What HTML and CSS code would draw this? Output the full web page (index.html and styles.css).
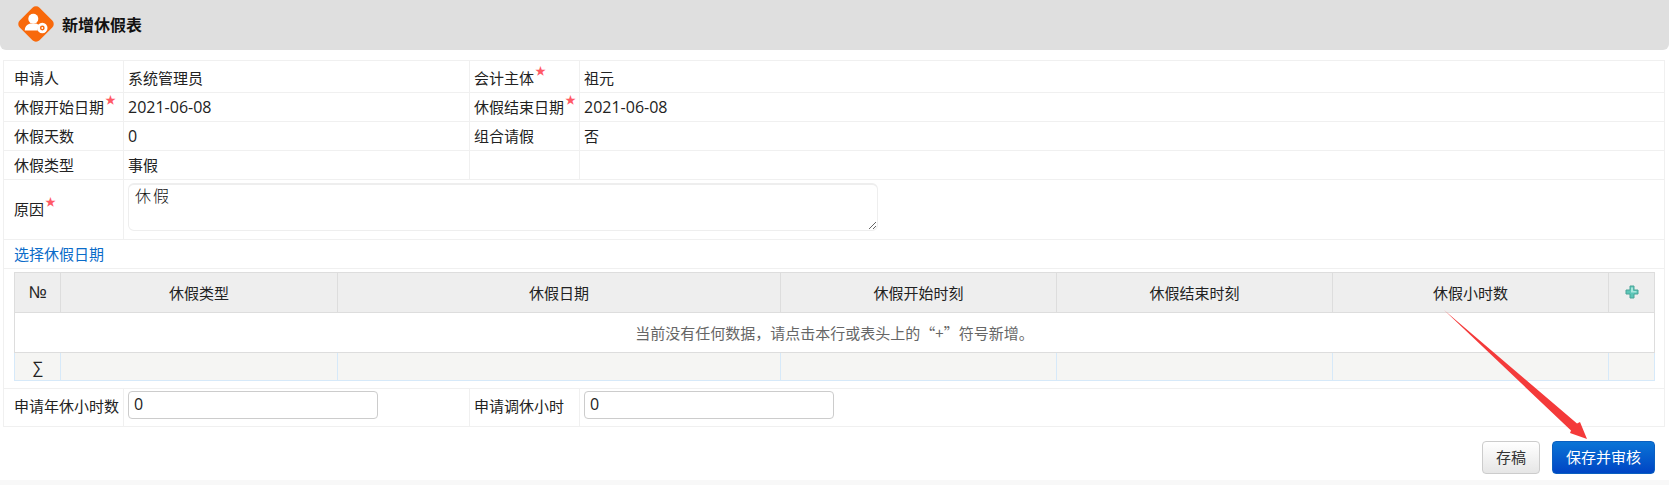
FILE: index.html
```html
<!DOCTYPE html>
<html lang="zh-CN">
<head>
<meta charset="utf-8">
<title>新增休假表</title>
<link rel="stylesheet" href="styles.css">
</head>
<body>
<div class="page">
  <header class="head">
    <svg class="logo" width="36" height="36" viewBox="0 0 36 36">
      <rect x="4" y="4" width="28" height="28" rx="5" transform="rotate(45 18 18)" fill="#f8690b"/>
      <circle cx="15.300" cy="12.700" r="5" fill="#fff"/>
      <path d="M6.700 24.500c0-3.500 2-6 5.500-7h6c1.500.5 2.500 1.200 3.200 2-1.400 1.200-2 3.200-1.600 5z" fill="#fff"/>
      <circle cx="24.300" cy="22" r="5.200" fill="#fff"/>
      <circle cx="24.300" cy="22" r="2.400" fill="#f8690b"/>
      <circle cx="24.300" cy="22" r=".9" fill="#fff"/>
    </svg>
    <h1 class="title">新增休假表</h1>
  </header>

  <table class="form">
    <colgroup><col class="c1"><col class="c2"><col class="c3"><col></colgroup>
    <tr class="r-first">
      <td class="label">申请人</td><td class="val">系统管理员</td>
      <td class="label-2">会计主体<span class="req">★</span></td><td class="val">祖元</td>
    </tr>
    <tr class="r">
      <td class="label">休假开始日期<span class="req">★</span></td><td class="val num">2021-06-08</td>
      <td class="label-2">休假结束日期<span class="req">★</span></td><td class="val num">2021-06-08</td>
    </tr>
    <tr class="r">
      <td class="label">休假天数</td><td class="val num">0</td>
      <td class="label-2">组合请假</td><td class="val">否</td>
    </tr>
    <tr class="r">
      <td class="label">休假类型</td><td class="val">事假</td>
      <td class="label-2"></td><td class="val"></td>
    </tr>
    <tr class="r-reason">
      <td class="label reason-label">原因<span class="req">★</span></td>
      <td class="val reason-cell" colspan="3"><textarea class="reason">休假</textarea></td>
    </tr>
    <tr class="r">
      <td class="label link-cell" colspan="4"><a class="link">选择休假日期</a></td>
    </tr>
    <tr class="r-grid">
      <td class="grid-cell" colspan="4">
        <table class="grid">
          <colgroup><col class="g-no"><col class="g-type"><col class="g-date"><col class="g-w"><col class="g-w"><col class="g-w"><col class="g-add"></colgroup>
          <thead>
            <tr>
              <th class="no">№</th><th>休假类型</th><th>休假日期</th><th>休假开始时刻</th><th>休假结束时刻</th><th>休假小时数</th>
              <th><svg class="plus" width="14" height="14" viewBox="0 0 14 14"><path d="M5 1h4v4h4v4H9v4H5V9H1V5h4z" fill="#5cc6b8" stroke="#4aa498" stroke-width="1" stroke-linejoin="round"/><path d="M6 2.500h2V6h3.500v1.500H6z" fill="#a8e6dc"/></svg></th>
            </tr>
          </thead>
          <tbody>
            <tr class="empty"><td colspan="7">当前没有任何数据，请点击本行或表头上的“+”符号新增。</td></tr>
          </tbody>
          <tfoot>
            <tr><td class="sum">∑</td><td></td><td></td><td></td><td></td><td></td><td></td></tr>
          </tfoot>
        </table>
      </td>
    </tr>
    <tr class="r-last">
      <td class="label">申请年休小时数</td><td class="val"><input class="field" value="0"></td>
      <td class="label-2">申请调休小时</td><td class="val"><input class="field" value="0"></td>
    </tr>
  </table>

  <div class="actions">
    <button class="btn">存稿</button>
    <button class="btn primary">保存并审核</button>
  </div>
  <div class="strip"></div>

  <svg class="arrow" width="1669" height="485" viewBox="0 0 1669 485">
    <path d="M1444 310 L1577 423.500 L1580 422 L1587 439 L1570 433 L1571 430.500 Z" fill="#f43a3a"/>
  </svg>
</div>
</body>
</html>
```
FILE: styles.css
```css
* { box-sizing: border-box; }
html, body { margin: 0; height: 100%; background: #fff; }
body {
  font-family: "Open Sans", "Noto Sans CJK SC", sans-serif;
  font-size: 15px;
  color: #222;
  overflow: hidden;
}
.page { position: relative; height: 485px; display: flex; flex-direction: column; }

.head {
  height: 50px;
  flex: none;
  background: #dfdfdf;
  border-radius: 0 0 6px 6px;
  display: flex;
  align-items: center;
  padding-left: 18px;
  gap: 8px;
}
.logo { flex: none; margin-top: -2px; }
.title { margin: 0; font-size: 16px; font-weight: 700; color: #111; line-height: 1; }

.form {
  margin: 10px 4px 0 3px;
  width: 1662px;
  flex: none;
  border-collapse: collapse;
  table-layout: fixed;
}
.form > tbody > tr > td { border: 1px solid #f0f0f0; padding: 0; }
.c1 { width: 120px; }
.c2 { width: 346px; }
.c3 { width: 110px; }
.form > tbody > .r-first > td { padding-top: 1px; }
.form > tbody > .r > td { padding-bottom: 2px; }
.r-first { height: 32px; }
.r { height: 29px; }
.r-reason { height: 60px; }
.r-grid { height: 120px; }
.r-last { height: 38px; }
.form > tbody > tr > .label { padding-left: 10px; white-space: nowrap; }
.form > tbody > tr > .label-2 { padding-left: 4px; white-space: nowrap; }
.form > tbody > tr > .val { padding-left: 4px; }
.form > tbody > tr > .num { font-size: 16px; padding-top: 2px; }
.form > tbody > .r-last > .label,
.form > tbody > .r-last > .label-2 { padding-bottom: 5px; }
.form > tbody > tr > .reason-label { padding-bottom: 3px; }
.form > tbody > tr > .reason-cell { vertical-align: top; padding-top: 3px; }
.form > tbody > .r-last > .val { vertical-align: top; padding-top: 2px; }
.req { color: #ff5a66; font-size: 11px; line-height: 0; vertical-align: 9px; margin-left: 1px; }
.link { color: #0b6cc9; cursor: pointer; }

.reason {
  display: block;
  width: 750px;
  height: 48px;
  margin: 0;
  padding: 0 6px;
  font: 300 16px/20px "Noto Sans CJK SC", sans-serif;
  letter-spacing: 2px;
  color: #111;
  background: #fff;
  border: 1px solid #eee;
  border-top-width: 2px;
  border-radius: 6px;
  outline: none;
}
.field {
  display: block;
  width: 250px;
  height: 28px;
  padding: 0 0 2px 5px;
  font: 16px "Open Sans", sans-serif;
  color: #222;
  border: 1px solid #ccc;
  border-radius: 4px;
  outline: none;
}
.form > tbody > tr > .grid-cell { padding: 3px 10px 7px; vertical-align: top; }
.grid {
  width: 1640px;
  border-collapse: collapse;
  table-layout: fixed;
}
.g-no { width: 46px; }
.g-type { width: 277px; }
.g-w { width: 276px; }
.g-date { width: 443px; }
.g-add { width: 46px; }
.grid th {
  height: 40px;
  padding: 0;
  font-weight: 400;
  background: #eee;
  border: 1px solid #ddd;
  text-align: center;
}
.grid th.no { font-family: "Liberation Sans", sans-serif; font-size: 17px; }
.plus { display: block; margin: -2px auto 0; }
.empty td {
  height: 40px;
  text-align: center;
  color: #666;
  font-family: "Noto Sans CJK SC", sans-serif;
  border: 1px solid #ddd;
}
.grid tfoot td {
  height: 28px;
  padding: 0;
  text-align: center;
  background: #f5f5f3;
  border: 1px solid #d6e9f9;
  border-top-color: #ddd;
}
.grid tfoot td.sum { font-size: 16px; }

.actions {
  display: flex;
  justify-content: flex-end;
  gap: 12px;
  margin-top: 14px;
  padding-right: 14px;
  flex: none;
}
.btn {
  height: 33px;
  width: 58px;
  padding: 0 0 2px;
  font: 15px "Noto Sans CJK SC", sans-serif;
  color: #333;
  background: linear-gradient(#fff, #e6e6e6);
  border: 1px solid #ccc;
  border-radius: 4px;
}
.primary {
  width: 103px;
  color: #fff;
  background: linear-gradient(#0a74d6, #0045c4);
  border-color: #0a5fc0;
}
.strip { flex: 1; margin-top: 6px; background: #f8f8f8; }
.arrow { position: absolute; left: 0; top: 0; pointer-events: none; }
```
